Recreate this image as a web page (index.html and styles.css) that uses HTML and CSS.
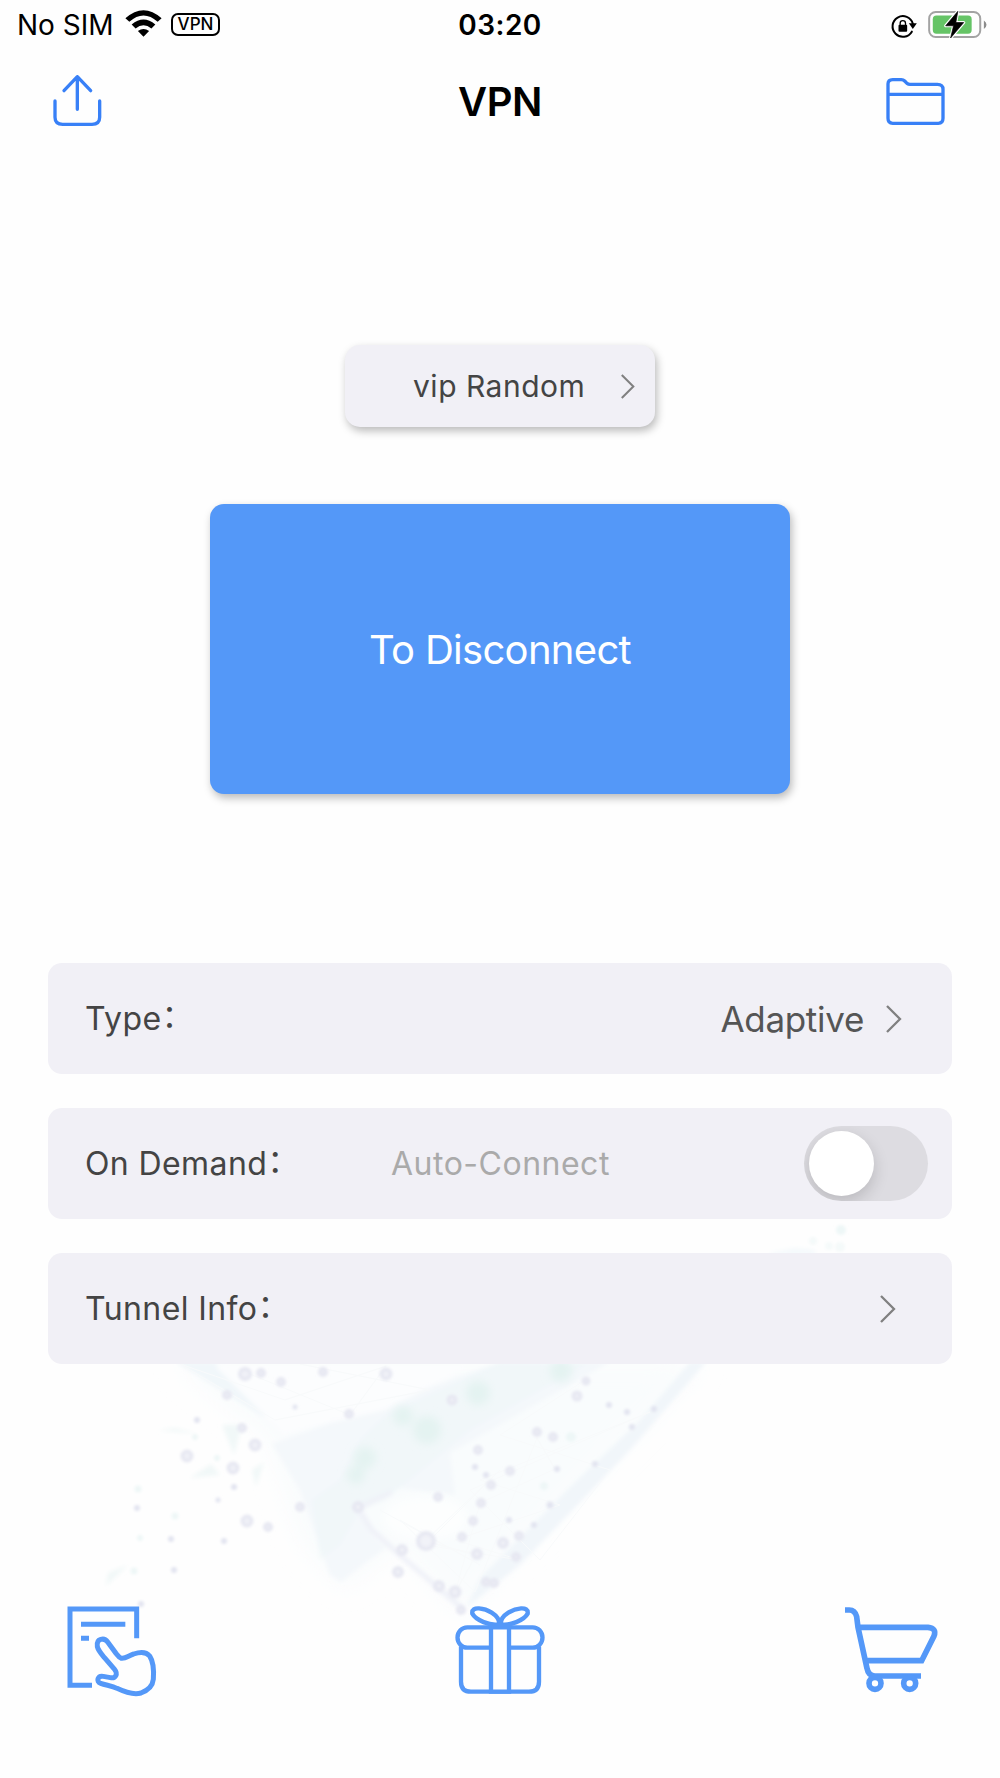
FILE: index.html
```html
<!DOCTYPE html>
<html lang="en">
<head>
    <meta charset="UTF-8">
    <meta name="viewport" content="width=device-width, initial-scale=1.0">
    <title>VPN</title>
    <link rel="stylesheet" href="styles.css">
</head>
<body>
    <div class="screen">
        <!-- Background artwork -->
        <svg class="backdrop" viewBox="80 1200 800 460" aria-hidden="true">
            <defs>
                <filter id="soft" x="-20%" y="-20%" width="140%" height="140%"><feGaussianBlur stdDeviation="2"/></filter>
                <filter id="haze" x="-50%" y="-50%" width="200%" height="200%"><feGaussianBlur stdDeviation="12"/></filter>
                <filter id="dot" x="-10%" y="-10%" width="120%" height="120%"><feGaussianBlur stdDeviation="1.5"/></filter>
                <filter id="glow" x="-10%" y="-10%" width="120%" height="120%"><feGaussianBlur stdDeviation="4"/></filter>
            </defs>
            <g filter="url(#haze)" fill="#f9fcfd">
                <path d="M175 1364L270 1440L300 1540L345 1590L400 1545L462 1615L540 1530L705 1364Z"/>
            </g>
            <g filter="url(#soft)">
                <path fill="#f1f7fa" d="M176 1362H215L275 1420L262 1416Z"/>
                <path fill="#f4f8fb" d="M272 1444L500 1362H610L450 1453L455 1495L400 1488L358 1508L372 1535L386 1548L365 1563L341 1582L330 1575L300 1490Z"/>
                <path fill="#eef6f8" d="M386 1415L500 1362H590L470 1430L440 1455L385 1500L360 1510L340 1545L320 1560L312 1500L340 1480L360 1440Z" opacity=".6"/>
                <path fill="#f1f6fa" d="M690 1362H706L630 1450L520 1565L466 1608L480 1578L570 1487L640 1420Z"/>
                <path fill="#fcfdfe" d="M283 1434L215 1366H470L385 1410Z"/>
                <path fill="none" stroke="#eff1f8" stroke-width="5" d="M392 1492L358 1508L372 1530L400 1555L462 1608"/>
                <path fill="#f1f8f8" d="M158 1430L198 1434L175 1428ZM222 1425H242L234 1455ZM190 1478L211 1464L220 1475ZM252 1470L264 1462L256 1487ZM106 1586L108 1573L128 1565Z"/>
                <path fill="#f4f9fc" d="M770 1253L795 1248L815 1250V1255H770Z"/>
            </g>
            <ellipse cx="425" cy="1518" rx="42" ry="22" fill="#fdfefe" filter="url(#glow)"/>
            <g class="mesh">
                <path d="M240 1370L350 1415L386 1366L285 1400L180 1364L275 1420L430 1390L300 1364M585 1380L500 1435L610 1470L540 1560L470 1490L650 1412L480 1480L560 1505L455 1540L520 1560L425 1545L500 1470L425 1541L476 1555L455 1593L480 1503L555 1469L537 1438L475 1592L400 1520L480 1565L380 1510"/>
            </g>
            <g filter="url(#glow)" fill="#e4f3f1">
                <circle cx="561" cy="1371" r="11"/><circle cx="427" cy="1430" r="14"/><circle cx="478" cy="1393" r="12"/>
                <circle cx="365" cy="1458" r="11"/><circle cx="356" cy="1475" r="9"/><circle cx="403" cy="1416" r="10"/>
            </g>
            <g filter="url(#dot)" fill="#eef7f7">
                <circle cx="571" cy="1437" r="5"/><circle cx="544" cy="1486" r="4"/><circle cx="195" cy="1437" r="3"/>
                <circle cx="217" cy="1458" r="3"/><circle cx="138" cy="1489" r="3.5"/><circle cx="175" cy="1516" r="3.5"/>
                <circle cx="140" cy="1538" r="3"/><circle cx="134" cy="1571" r="3.5"/><circle cx="841" cy="1230" r="5"/>
                <circle cx="813" cy="1241" r="4" opacity=".6"/><circle cx="829" cy="1246" r="4" opacity=".5"/><circle cx="840" cy="1247" r="5" opacity=".6"/>
            </g>
            <g class="rings" filter="url(#dot)">
                <circle cx="245" cy="1374" r="5"/><circle cx="261" cy="1373" r="3"/><circle cx="323" cy="1372" r="3"/>
                <circle cx="386" cy="1374" r="4.5"/><circle cx="281" cy="1382" r="3"/><circle cx="227" cy="1395" r="3"/>
                <circle cx="349" cy="1414" r="3"/><circle cx="452" cy="1400" r="3.5"/><circle cx="586" cy="1381" r="2.5"/>
                <circle cx="577" cy="1396" r="3.5"/><circle cx="242" cy="1428" r="3"/><circle cx="255" cy="1445" r="4.5"/>
                <circle cx="187" cy="1456" r="4.5"/><circle cx="233" cy="1468" r="4.5"/><circle cx="300" cy="1507" r="3"/>
                <circle cx="247" cy="1521" r="4.5"/><circle cx="268" cy="1527" r="3"/><circle cx="426" cy="1541" r="8"/>
                <circle cx="398" cy="1572" r="4"/><circle cx="455" cy="1592" r="4.5"/><circle cx="439" cy="1586" r="4"/>
                <circle cx="477" cy="1554" r="4"/><circle cx="503" cy="1543" r="4"/><circle cx="516" cy="1557" r="3"/>
                <circle cx="519" cy="1536" r="3"/><circle cx="462" cy="1537" r="3"/><circle cx="537" cy="1432" r="3"/>
                <circle cx="553" cy="1437" r="3"/><circle cx="478" cy="1450" r="3"/><circle cx="491" cy="1485" r="3"/>
                <circle cx="510" cy="1471" r="3"/><circle cx="481" cy="1503" r="3"/><circle cx="473" cy="1521" r="3"/>
                <circle cx="438" cy="1497" r="3"/><circle cx="402" cy="1550" r="4"/><circle cx="358" cy="1507" r="4"/>
                <circle cx="486" cy="1582" r="3"/><circle cx="494" cy="1583" r="3"/><circle cx="461" cy="1610" r="3"/>
            </g>
            <g filter="url(#dot)" fill="#e2e4f0">
                <circle cx="609" cy="1405" r="3"/><circle cx="627" cy="1412" r="3"/><circle cx="654" cy="1409" r="3"/>
                <circle cx="632" cy="1427" r="3"/><circle cx="595" cy="1464" r="3"/><circle cx="557" cy="1469" r="3"/>
                <circle cx="486" cy="1475" r="3"/><circle cx="475" cy="1467" r="3"/><circle cx="550" cy="1505" r="3.5"/>
                <circle cx="509" cy="1520" r="3"/><circle cx="534" cy="1525" r="3"/><circle cx="197" cy="1420" r="3"/>
                <circle cx="295" cy="1407" r="2.5"/><circle cx="234" cy="1487" r="3"/><circle cx="218" cy="1500" r="2.5"/>
                <circle cx="137" cy="1508" r="3"/><circle cx="171" cy="1539" r="3"/><circle cx="224" cy="1541" r="3"/>
                <circle cx="174" cy="1570" r="3"/><circle cx="141" cy="1604" r="3"/>
            </g>
        </svg>

        <!-- Status bar -->
        <div class="status-bar">
            <div class="status-left">
                <span class="carrier">No SIM</span>
                <svg class="wifi" viewBox="376 30 110 82">
                    <path d="M376 55Q431 6 486 55L474 66Q431 27 388 66ZM395 74Q431 44 467 74L455 86Q431 66 407 86ZM414 94Q431 81 448 94L431 111Z"/>
                </svg>
                <span class="vpn-badge">VPN</span>
            </div>
            <span class="clock">03:20</span>
            <div class="status-right">
                <svg class="lock" viewBox="150 38 80 78">
                    <path d="M215 94A31 31 0 1 1 218 70" fill="none" stroke="#000" stroke-width="6" stroke-linecap="round"/>
                    <path d="M206 69H230L218 86Z"/>
                    <rect x="175" y="73" width="26" height="21" rx="3"/>
                    <path d="M180 75V69A8 8 0 0 1 196 69V75" fill="none" stroke="#000" stroke-width="4"/>
                </svg>
                <svg class="battery" viewBox="262 28 182 88">
                    <rect x="267" y="34" width="155" height="76" rx="20" fill="none" stroke="#a3a3a3" stroke-width="6"/>
                    <path d="M433 60Q441 65 441 73T433 86Z" fill="#8c8c8c"/>
                    <rect x="278" y="45" width="118" height="55" rx="11" fill="#65c466"/>
                    <path d="M354 32L317 76H341L332 113L372 66H348Z" stroke="#fff" stroke-width="9" stroke-linejoin="round"/>
                    <path d="M354 32L317 76H341L332 113L372 66H348Z" stroke="#000" stroke-width="2" stroke-linejoin="round"/>
                </svg>
            </div>
        </div>

        <!-- Navigation -->
        <div class="nav">
            <svg class="icon-share" viewBox="150 210 165 180">
                <path d="M232 328V230M192 272L232 230L272 272M165 303V352Q165 373 188 373H276Q299 373 299 352V303"/>
            </svg>
            <h1>VPN</h1>
            <svg class="icon-folder" viewBox="129 216 195 168">
                <path d="M144 252Q144 239 158 239H184Q190 239 194 243L201 250Q205 253 210 253H292Q309 253 309 268V355Q309 370 295 370H158Q144 370 144 355ZM144 283H309"/>
            </svg>
        </div>

        <div class="server">
            <span>vip Random</span>
            <svg class="chevron chevron-small" viewBox="0 0 18 30"><path d="M2 2L15 15L2 28"/></svg>
        </div>

        <button class="connect">To Disconnect</button>

        <!-- Settings -->
        <div class="settings">
            <div class="row row-type">
                <span class="label">Type<span class="colon">：</span></span>
                <span class="value">Adaptive</span>
                <svg class="chevron" viewBox="0 0 18 30"><path d="M2 2L15 15L2 28"/></svg>
            </div>
            <div class="row row-demand">
                <span class="label">On Demand<span class="colon">：</span></span>
                <span class="hint">Auto-Connect</span>
                <div class="switch"><div class="knob"></div></div>
            </div>
            <div class="row row-tunnel">
                <span class="label">Tunnel Info<span class="colon">：</span></span>
                <svg class="chevron" viewBox="0 0 18 30"><path d="M2 2L15 15L2 28"/></svg>
            </div>
        </div>

        <!-- Bottom bar -->
        <div class="tabs">
            <svg viewBox="0 0 420 420">
                <path stroke-width="15" d="M156 316H90V87H290V175M123 133H256M123 175H147"/>
                <path stroke-width="15" d="M242 234C236 232 233 226 228 220L203 186C193 172 168 175 172 200C175 213 186 224 196 236L223 267C235 282 227 296 211 293L190 289C173 286 167 305 182 310C198 316 216 317 231 325C258 338 281 345 303 339C325 331 338 318 340 298C342 271 339 243 329 228C319 216 299 216 281 222C266 226 255 238 242 234Z"/>
            </svg>
            <svg viewBox="0 0 420 420">
                <path stroke-width="13" d="M112 142H308A29 30 0 0 1 308 203H112A29 30 0 0 1 112 142ZM93 200V305Q93 335 123 335H297Q327 335 327 305V200"/>
                <path fill="#fff" stroke-width="13" d="M183 142H237V335H183ZM207 133C180 138 138 121 127 101C123 76 165 85 185 98C199 107 209 119 207 133ZM213 133C240 138 282 121 293 101C297 76 255 85 235 98C221 107 211 119 213 133Z"/>
            </svg>
            <svg viewBox="0 0 420 420">
                <path stroke-width="17" d="M75 90H88Q105 90 110 110L114 142L141 265Q145 288 165 288H303M115 142H324Q351 145 342 168L305 242H138"/>
                <circle cx="165" cy="310" r="18" stroke-width="17"/>
                <circle cx="269" cy="310" r="18" stroke-width="17"/>
            </svg>
        </div>
    </div>
</body>
</html>
```
FILE: styles.css
```css
* {
    box-sizing: border-box;
    margin: 0;
    padding: 0;
}

body {
    font-family: Inter, "Noto Sans CJK SC", sans-serif;
    background-color: #fefefe;
    color: #444;
}

svg {
    display: block;
}

.screen {
    position: relative;
    width: 1000px;
    height: 1778px;
    overflow: hidden;
    display: flex;
    flex-direction: column;
    align-items: center;
}

/* Artwork sits behind the whole page */
.backdrop {
    position: absolute;
    z-index: -1;
    left: 80px;
    top: 1200px;
    width: 800px;
    height: 460px;
}

.mesh {
    fill: none;
    stroke: #f8fafb;
    stroke-width: 1;
}

.rings {
    fill: #f1f2f8;
    stroke: #e7e8f2;
    stroke-width: 4;
}

/* Status bar */
.status-bar {
    width: 100%;
    height: 50px;
    padding: 0 12px 0 17px;
    display: grid;
    grid-template-columns: 1fr auto 1fr;
    color: #000;
    font-size: 28px;
    line-height: 51px;
}

.status-left,
.status-right {
    display: flex;
    align-items: flex-start;
}

.status-right {
    justify-content: flex-end;
}

.carrier {
    width: 108px;
}

.wifi {
    width: 37px;
    height: 27px;
    margin-top: 10px;
}

.vpn-badge {
    width: 49px;
    height: 23px;
    margin: 13px 0 0 9px;
    border: 2px solid #000;
    border-radius: 7px;
    font-size: 17px;
    font-weight: 500;
    line-height: 19px;
    text-align: center;
}

.clock {
    font-weight: 600;
    letter-spacing: 0.5px;
    margin-left: -5px;
}

.lock {
    width: 27px;
    height: 26px;
    margin-top: 13px;
}

.battery {
    width: 61px;
    height: 29px;
    margin: 10px 0 0 10px;
}

/* Navigation */
.nav {
    width: 100%;
    height: 100px;
    padding: 0 52px 0 50px;
    display: grid;
    grid-template-columns: 65px 1fr 65px;
    align-items: center;
}

.nav svg {
    fill: none;
    stroke: #3880f7;
    stroke-width: 10;
    stroke-linecap: round;
    stroke-linejoin: round;
}

.icon-share {
    width: 55px;
    height: 60px;
}

.icon-folder {
    width: 65px;
    height: 56px;
}

h1 {
    padding-top: 4px;
    padding-left: 2px;
    color: #000;
    font-size: 40px;
    font-weight: 600;
    letter-spacing: -0.5px;
    line-height: 48px;
    text-align: center;
}

/* Server picker */
.server {
    width: 310px;
    height: 82px;
    margin-top: 195px;
    padding: 0 19px 0 68px;
    display: flex;
    align-items: center;
    justify-content: space-between;
    background-color: #f1f0f6;
    border-radius: 15px;
    box-shadow: 2px 4px 8px rgba(0, 0, 0, 0.27);
    font-size: 30px;
    letter-spacing: 0.5px;
}

.chevron {
    width: 18px;
    height: 30px;
    fill: none;
    stroke: #808080;
    stroke-width: 2.3;
}

.chevron-small {
    width: 16px;
    height: 27px;
}

.connect {
    width: 580px;
    height: 290px;
    margin-top: 77px;
    border: none;
    border-radius: 14px;
    background-color: #5498f8;
    box-shadow: 2px 4px 8px rgba(0, 0, 0, 0.27);
    color: #fff;
    font-family: inherit;
    font-size: 40px;
    letter-spacing: -0.7px;
}

/* Settings rows */
.settings {
    width: 904px;
    margin-top: 169px;
    display: flex;
    flex-direction: column;
    gap: 34px;
}

.row {
    height: 111px;
    padding-left: 37px;
    display: flex;
    align-items: center;
    background-color: #f1f0f6;
    border-radius: 14px;
    font-size: 32px;
    line-height: 40px;
}

.label {
    flex: 1;
    letter-spacing: 0.4px;
}

.colon {
    line-height: 1;
    vertical-align: 3px;
}

.row-type {
    padding-right: 49px;
}

.value {
    margin-right: 21px;
    color: #555;
    font-size: 35px;
    letter-spacing: -0.3px;
}

.row-demand {
    padding-right: 24px;
}

.row-demand .label {
    flex: none;
    width: 306px;
}

.hint {
    flex: 1;
    color: #aaa;
    letter-spacing: 0.5px;
}

.switch {
    width: 124px;
    height: 75px;
    padding: 5px;
    border-radius: 38px;
    background-color: #dddce1;
    overflow: hidden;
}

.knob {
    width: 65px;
    height: 65px;
    border-radius: 50%;
    background-color: #fff;
    box-shadow: 0 6px 16px rgba(0, 0, 0, 0.16);
}

.row-tunnel {
    padding-right: 55px;
}

/* Bottom bar */
.tabs {
    width: 100%;
    margin-top: 216px;
    padding: 0 40px;
    display: flex;
    justify-content: space-between;
}

.tabs svg {
    width: 140px;
    height: 140px;
    fill: none;
    stroke: #5498f8;
}
```
